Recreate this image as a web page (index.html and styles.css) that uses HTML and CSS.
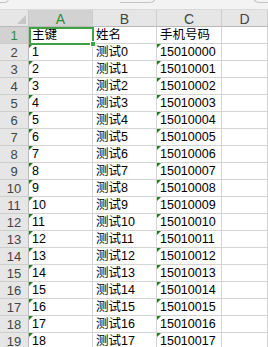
FILE: index.html
```html
<!DOCTYPE html>
<html>
<head>
<meta charset="utf-8">
<link rel="stylesheet" href="styles.css">
</head>
<body>
<div class="topbar">
  <div class="box box1"></div>
  <div class="box box2"></div>
  <div class="box box3"></div>
</div>
<div class="sheet">
  <div class="corner"><span class="tri"></span></div>
  <div class="ch sel">A</div>
  <div class="ch">B</div>
  <div class="ch">C</div>
  <div class="ch">D</div>

  <div class="rh selrow">1</div><div class="c">主键</div><div class="c">姓名</div><div class="c">手机号码</div><div class="c"></div>
  <div class="rh">2</div><div class="c t">1</div><div class="c">测试0</div><div class="c t">15010000</div><div class="c"></div>
  <div class="rh">3</div><div class="c t">2</div><div class="c">测试1</div><div class="c t">15010001</div><div class="c"></div>
  <div class="rh">4</div><div class="c t">3</div><div class="c">测试2</div><div class="c t">15010002</div><div class="c"></div>
  <div class="rh">5</div><div class="c t">4</div><div class="c">测试3</div><div class="c t">15010003</div><div class="c"></div>
  <div class="rh">6</div><div class="c t">5</div><div class="c">测试4</div><div class="c t">15010004</div><div class="c"></div>
  <div class="rh">7</div><div class="c t">6</div><div class="c">测试5</div><div class="c t">15010005</div><div class="c"></div>
  <div class="rh">8</div><div class="c t">7</div><div class="c">测试6</div><div class="c t">15010006</div><div class="c"></div>
  <div class="rh">9</div><div class="c t">8</div><div class="c">测试7</div><div class="c t">15010007</div><div class="c"></div>
  <div class="rh">10</div><div class="c t">9</div><div class="c">测试8</div><div class="c t">15010008</div><div class="c"></div>
  <div class="rh">11</div><div class="c t">10</div><div class="c">测试9</div><div class="c t">15010009</div><div class="c"></div>
  <div class="rh">12</div><div class="c t">11</div><div class="c">测试10</div><div class="c t">15010010</div><div class="c"></div>
  <div class="rh">13</div><div class="c t">12</div><div class="c">测试11</div><div class="c t">15010011</div><div class="c"></div>
  <div class="rh">14</div><div class="c t">13</div><div class="c">测试12</div><div class="c t">15010012</div><div class="c"></div>
  <div class="rh">15</div><div class="c t">14</div><div class="c">测试13</div><div class="c t">15010013</div><div class="c"></div>
  <div class="rh">16</div><div class="c t">15</div><div class="c">测试14</div><div class="c t">15010014</div><div class="c"></div>
  <div class="rh">17</div><div class="c t">16</div><div class="c">测试15</div><div class="c t">15010015</div><div class="c"></div>
  <div class="rh">18</div><div class="c t">17</div><div class="c">测试16</div><div class="c t">15010016</div><div class="c"></div>
  <div class="rh">19</div><div class="c t">18</div><div class="c">测试17</div><div class="c t">15010017</div><div class="c"></div>

  <div class="selection"><span class="handle"></span></div>
</div>
</body>
</html>
```

FILE: styles.css
```css
html, body {
  margin: 0;
  padding: 0;
  background: #ffffff;
  overflow: hidden;
}
body {
  width: 268px;
  height: 347px;
  font-family: "Liberation Sans", "Noto Sans CJK SC", sans-serif;
}
.topbar {
  position: relative;
  height: 10px;
  background: #f3f3f3;
  border-bottom: 1px solid #d9d9d9;
  box-sizing: border-box;
  overflow: hidden;
}
.box {
  position: absolute;
  top: -4px;
  height: 7px;
  border: 1px solid #c4c4c4;
  background: #f3f3f3;
  box-sizing: border-box;
}
.box1 {
  left: -10px;
  width: 19px;
  border-radius: 0 0 4px 0;
}
.box2 {
  left: 120px;
  width: 36px;
  border-left: none;
  border-radius: 0 0 6px 0;
}
.box3 {
  left: 253px;
  width: 15px;
  border-right: none;
  border-radius: 0 0 0 6px;
}
.sheet {
  position: relative;
  display: grid;
  grid-template-columns: 29px 64px 64px 65px 46px;
  grid-auto-rows: 17px;
  overflow: hidden;
}
.corner {
  position: relative;
  background: #e6e6e6;
  border-right: 1px solid #c8c8c8;
  border-bottom: 1px solid #b9b9b9;
  box-sizing: border-box;
}
.tri {
  position: absolute;
  right: 2px;
  bottom: 2px;
  width: 0;
  height: 0;
  border-left: 9px solid transparent;
  border-bottom: 9px solid #c6c6c6;
}
.ch {
  background: #e6e6e6;
  border-right: 1px solid #cdcdcd;
  border-bottom: 1px solid #b9b9b9;
  box-sizing: border-box;
  display: flex;
  align-items: center;
  justify-content: center;
  font-size: 14px;
  color: #444444;
  padding-top: 1px;
}
.ch.sel {
  background: #d2d2d2;
  color: #2e8b3a;
}
.rh {
  background: #e6e6e6;
  border-right: 1px solid #b9b9b9;
  border-bottom: 1px solid #cdcdcd;
  box-sizing: border-box;
  display: flex;
  align-items: center;
  justify-content: center;
  font-size: 13px;
  color: #444444;
  padding-top: 1px;
}
.rh.selrow {
  background: #d2d2d2;
  color: #2e8b3a;
}
.c {
  position: relative;
  border-right: 1px solid #d4d4d4;
  border-bottom: 1px solid #d4d4d4;
  box-sizing: border-box;
  display: flex;
  align-items: flex-end;
  padding: 0 0 0 3px;
  font-size: 12.5px;
  line-height: 15px;
  color: #000000;
  white-space: nowrap;
  overflow: hidden;
}
.t::before {
  content: "";
  position: absolute;
  left: 0;
  top: 0;
  width: 0;
  height: 0;
  border-top: 4px solid #1e7b1e;
  border-right: 4px solid transparent;
}
.selection {
  position: absolute;
  left: 29px;
  top: 17px;
  width: 65px;
  height: 18px;
  border: 2px solid #3fa244;
  box-sizing: border-box;
  pointer-events: none;
}
.handle {
  position: absolute;
  right: -4px;
  bottom: -4px;
  width: 6px;
  height: 6px;
  background: #3fa244;
  border: 1px solid #ffffff;
  box-sizing: border-box;
}
```
